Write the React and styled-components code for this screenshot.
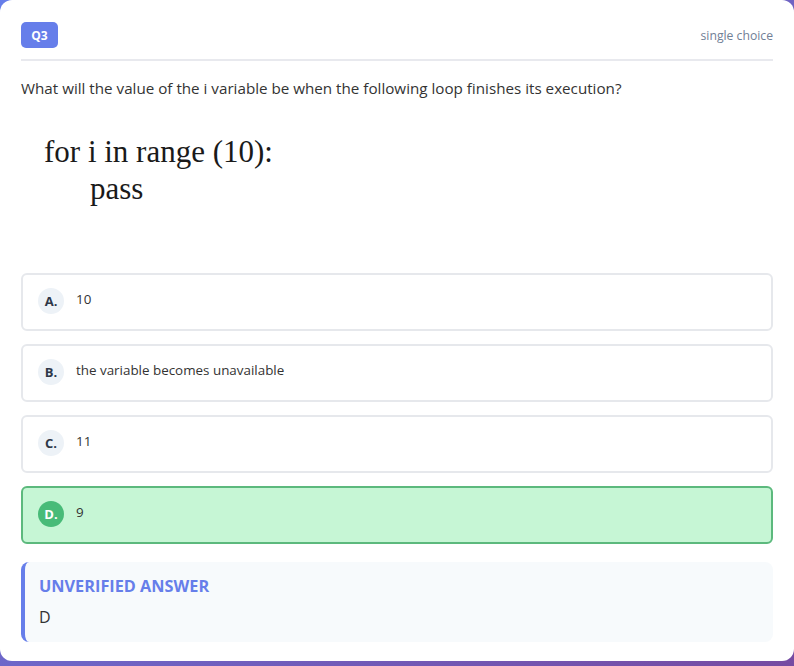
import React from 'react';
import styled, { createGlobalStyle } from 'styled-components';

const GlobalStyle = createGlobalStyle`
  html, body {
    margin: 0;
    padding: 0;
  }
  body {
    min-height: 666px;
    background: linear-gradient(135deg, #667eea 0%, #764ba2 100%);
    font-family: "Open Sans", "Noto Sans", sans-serif;
    color: #333;
  }
`;

const Card = styled.div`
  background: #fff;
  border-radius: 12px;
  padding: 22px 21px 19px 21px;
  box-sizing: border-box;
  width: 794px;
`;

const Header = styled.div`
  display: flex;
  align-items: center;
  justify-content: space-between;
  padding-bottom: 11px;
  border-bottom: 2px solid #e8e9ee;
`;

const Badge = styled.span`
  display: inline-flex;
  align-items: center;
  justify-content: center;
  width: 37px;
  height: 26px;
  border-radius: 5px;
  background: #667eea;
  color: #fff;
  font-size: 12px;
  font-weight: 700;
`;

const TypeLabel = styled.span`
  font-size: 12.2px;
  color: #718096;
`;

const Question = styled.p`
  margin: 15px 0 0 0;
  font-size: 15.2px;
  line-height: 24px;
  color: #333;
`;

const CodeImage = styled.div`
  margin: 14px 0 0 0;
  height: 140px;
  padding: 19px 0 0 23px;
  box-sizing: border-box;
  font-family: "Liberation Serif", "Times New Roman", serif;
  font-size: 31px;
  line-height: 37px;
  color: #1a1a1a;
`;

const CodeLine = styled.div`
  padding-left: ${p => p.indent || 0}px;
`;

const Options = styled.div`
  display: flex;
  flex-direction: column;
  gap: 13px;
  margin-top: 19px;
`;

const Option = styled.div`
  display: flex;
  align-items: flex-start;
  gap: 12px;
  padding: 13px 15px 15px 15px;
  border: 2px solid ${p => (p.correct ? '#5cb97d' : '#e6e8ec')};
  background: ${p => (p.correct ? '#c6f6d5' : '#fff')};
  border-radius: 6px;
`;

const Letter = styled.span`
  flex: none;
  display: inline-flex;
  align-items: center;
  justify-content: center;
  width: 26px;
  height: 26px;
  border-radius: 50%;
  background: ${p => (p.correct ? '#48bb78' : '#edf2f7')};
  color: ${p => (p.correct ? '#fff' : '#2d3748')};
  font-size: 13px;
  font-weight: 700;
`;

const OptionText = styled.span`
  font-size: 13.4px;
  line-height: 22px;
  color: #333;
`;

const AnswerBox = styled.div`
  margin-top: 18px;
  background: #f7fafc;
  border-left: 4px solid #667eea;
  border-radius: 8px;
  padding: 12px 14px 13px 14px;
`;

const AnswerTitle = styled.div`
  font-size: 16.3px;
  font-weight: 700;
  color: #667eea;
  line-height: 24px;
`;

const AnswerValue = styled.div`
  margin-top: 7px;
  font-size: 16px;
  line-height: 24px;
  color: #333;
`;

const options = [
  { key: 'A', text: '10' },
  { key: 'B', text: 'the variable becomes unavailable' },
  { key: 'C', text: '11' },
  { key: 'D', text: '9', correct: true },
];

export default function App() {
  return (
    <>
      <GlobalStyle />
      <Card>
        <Header>
          <Badge>Q3</Badge>
          <TypeLabel>single choice</TypeLabel>
        </Header>
        <Question>
          What will the value of the i variable be when the following loop finishes its execution?
        </Question>
        <CodeImage>
          <CodeLine>for i in range (10):</CodeLine>
          <CodeLine indent={46}>pass</CodeLine>
        </CodeImage>
        <Options>
          {options.map(o => (
            <Option key={o.key} correct={o.correct}>
              <Letter correct={o.correct}>{o.key}.</Letter>
              <OptionText>{o.text}</OptionText>
            </Option>
          ))}
        </Options>
        <AnswerBox>
          <AnswerTitle>UNVERIFIED ANSWER</AnswerTitle>
          <AnswerValue>D</AnswerValue>
        </AnswerBox>
      </Card>
    </>
  );
}
